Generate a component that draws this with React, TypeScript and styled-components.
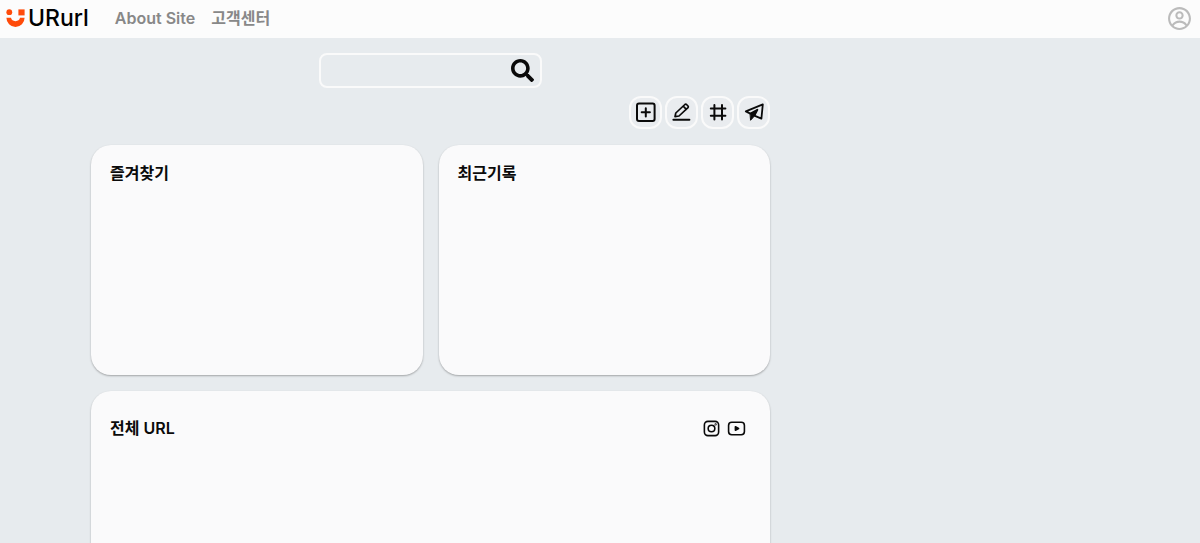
import React from "react";
import styled, { createGlobalStyle } from "styled-components";
import { FaSearch } from "react-icons/fa";
import { CgProfile } from "react-icons/cg";

const GlobalStyle = createGlobalStyle`
  * { box-sizing: border-box; }
  body {
    margin: 0;
    background: #e7ebee;
    color: #0a0a0a;
    font-family: Inter, "Noto Sans CJK KR", sans-serif;
  }
  #root { height: 100vh; overflow: hidden; }
  button { font: inherit; color: inherit; cursor: pointer; }
`;

const Header = styled.header`
  display: flex;
  align-items: center;
  height: 38px;
  padding: 0 8px 2px 6px;
  background: #fcfcfc;
`;

const Logo = styled.a`
  display: flex;
  align-items: center;
  gap: 3px;
  color: #000;
  font-size: 23px;
  font-weight: 500;
  line-height: 32px;
  text-decoration: none;
`;

const Nav = styled.nav`
  display: flex;
  gap: 16px;
  margin-left: 26px;
`;

const NavLink = styled.a`
  color: #888;
  font-size: 16px;
  font-weight: 600;
  line-height: 24px;
  text-decoration: none;
`;

const ProfileButton = styled.button`
  display: flex;
  margin-left: auto;
  padding: 0;
  border: 0;
  background: none;
  color: #bbb;
  font-size: 25px;
`;

const Main = styled.main`
  width: calc(60% - 41px);
  min-width: 480px;
  margin-left: 91px;
  padding-top: 15px;
`;

const SearchForm = styled.form`
  display: flex;
  align-items: center;
  width: 223px;
  height: 35px;
  margin: 0 auto;
  padding-right: 6px;
  border: 2px solid #fafafa;
  border-radius: 8px;
`;

const SearchInput = styled.input`
  flex: 1;
  min-width: 0;
  height: 100%;
  padding: 0 8px;
  border: 0;
  outline: 0;
  background: none;
  font: inherit;
`;

const SearchButton = styled.button`
  display: flex;
  padding: 0;
  border: 0;
  background: none;
  font-size: 23px;
`;

const Toolbar = styled.div`
  display: flex;
  justify-content: flex-end;
  gap: 3px;
  margin: 8px 0 16px;
`;

const ToolButton = styled.button`
  display: flex;
  align-items: center;
  justify-content: center;
  width: 33px;
  height: 33px;
  padding: 0;
  border: 2px solid #fafafa;
  border-radius: 12px;
  background: #e9ecef;
`;

const Boards = styled.div`
  display: grid;
  grid-template-columns: 1fr 1fr;
  gap: 16px;
`;

const Card = styled.section<{ $wide?: boolean }>`
  grid-column: ${({ $wide }) => ($wide ? "1 / -1" : "auto")};
  min-height: ${({ $wide }) => ($wide ? "400px" : "230px")};
  padding: ${({ $wide }) => ($wide ? "25px 24px 16px 19px" : "16px 19px")};
  border-radius: 20px;
  background: #fafafb;
  box-shadow: 0 1px 2px rgba(0, 0, 0, 0.3);
`;

const CardHeader = styled.div`
  display: flex;
  align-items: center;
  justify-content: space-between;
`;

const Title = styled.h2`
  margin: 0;
  font-size: 16px;
  font-weight: 600;
  line-height: 24px;
`;

const Filters = styled.div`
  display: flex;
  gap: 6px;
`;

const FilterButton = styled.button`
  display: flex;
  padding: 0;
  border: 0;
  background: none;
`;

const Icon = styled.svg.attrs({ "aria-hidden": true, viewBox: "0 0 24 24" })<{ $size: number }>`
  width: ${({ $size }) => $size}px;
  height: ${({ $size }) => $size}px;
  fill: none;
  stroke: currentColor;
  stroke-width: 2;
  stroke-linecap: round;
  stroke-linejoin: round;
`;

const LogoMark = () => (
  <svg width="19" height="20" viewBox="0 0 19 20" fill="#ff4b0a" aria-hidden="true">
    <circle cx="3.3" cy="4.2" r="2.9" />
    <rect x="12.4" y="1.4" width="6.2" height="6" />
    <path d="M0.4 9.8H5A4.6 4.2 0 0 0 14 9.8H18.6A9.1 9.2 0 0 1 0.4 9.8Z" />
  </svg>
);

const tools = [
  {
    label: "URL 추가",
    art: (
      <>
        <rect x="3" y="2.6" width="17.6" height="17.4" rx="2" />
        <path d="M11.8 7.2v8.2M7.7 11.3h8.2" />
      </>
    ),
  },
  {
    label: "편집",
    art: (
      <>
        <path d="M5 15.7 5.8 12 14.9 3.5Q15.7 2.8 16.5 3.5L18 5Q18.7 5.8 18 6.6L9 15ZM13.2 5.2 16.3 8.3" strokeWidth="1.7" />
        <path d="M3.4 18.8h16" />
      </>
    ),
  },
  {
    label: "해시태그",
    art: <path d="M8.4 4v14.4M16 4v14.4M4.8 7.6h14.6M4.8 14.8h14.6" />,
  },
  {
    label: "공유",
    art: (
      <>
        <path d="M20.8 3.4 3.8 10.4 8.4 12.6 15.4 8.8 12.4 14.6 19.4 17.6Z" strokeWidth="1.8" />
        <path d="M8.4 12.8 15 9 12.4 15 8.8 19Z" fill="currentColor" strokeWidth="1" />
      </>
    ),
  },
];

const filters = [
  {
    label: "Instagram",
    art: (
      <>
        <rect x="3" y="3" width="18" height="18" rx="4.5" />
        <circle cx="12" cy="12" r="4.2" />
        <circle cx="17.2" cy="6.8" r="0.4" />
      </>
    ),
  },
  {
    label: "YouTube",
    art: (
      <>
        <rect x="2" y="4.2" width="20" height="15.6" rx="4" />
        <path d="m10.6 9.8 4 2.2-4 2.2Z" fill="currentColor" />
      </>
    ),
  },
];

export default function App() {
  return (
    <>
      <GlobalStyle />
      <Header>
        <Logo href="#">
          <LogoMark />
          URurl
        </Logo>
        <Nav>
          <NavLink href="#about">About Site</NavLink>
          <NavLink href="#support">고객센터</NavLink>
        </Nav>
        <ProfileButton type="button" aria-label="프로필">
          <CgProfile />
        </ProfileButton>
      </Header>
      <Main>
        <SearchForm role="search" onSubmit={(e) => e.preventDefault()}>
          <SearchInput type="text" aria-label="검색어" />
          <SearchButton type="submit" aria-label="검색">
            <FaSearch />
          </SearchButton>
        </SearchForm>
        <Toolbar>
          {tools.map(({ label, art }) => (
            <ToolButton key={label} type="button" aria-label={label}>
              <Icon $size={24}>{art}</Icon>
            </ToolButton>
          ))}
        </Toolbar>
        <Boards>
          <Card>
            <Title>즐겨찾기</Title>
          </Card>
          <Card>
            <Title>최근기록</Title>
          </Card>
          <Card $wide>
            <CardHeader>
              <Title>전체 URL</Title>
              <Filters>
                {filters.map(({ label, art }) => (
                  <FilterButton key={label} type="button" aria-label={label}>
                    <Icon $size={19}>{art}</Icon>
                  </FilterButton>
                ))}
              </Filters>
            </CardHeader>
          </Card>
        </Boards>
      </Main>
    </>
  );
}
